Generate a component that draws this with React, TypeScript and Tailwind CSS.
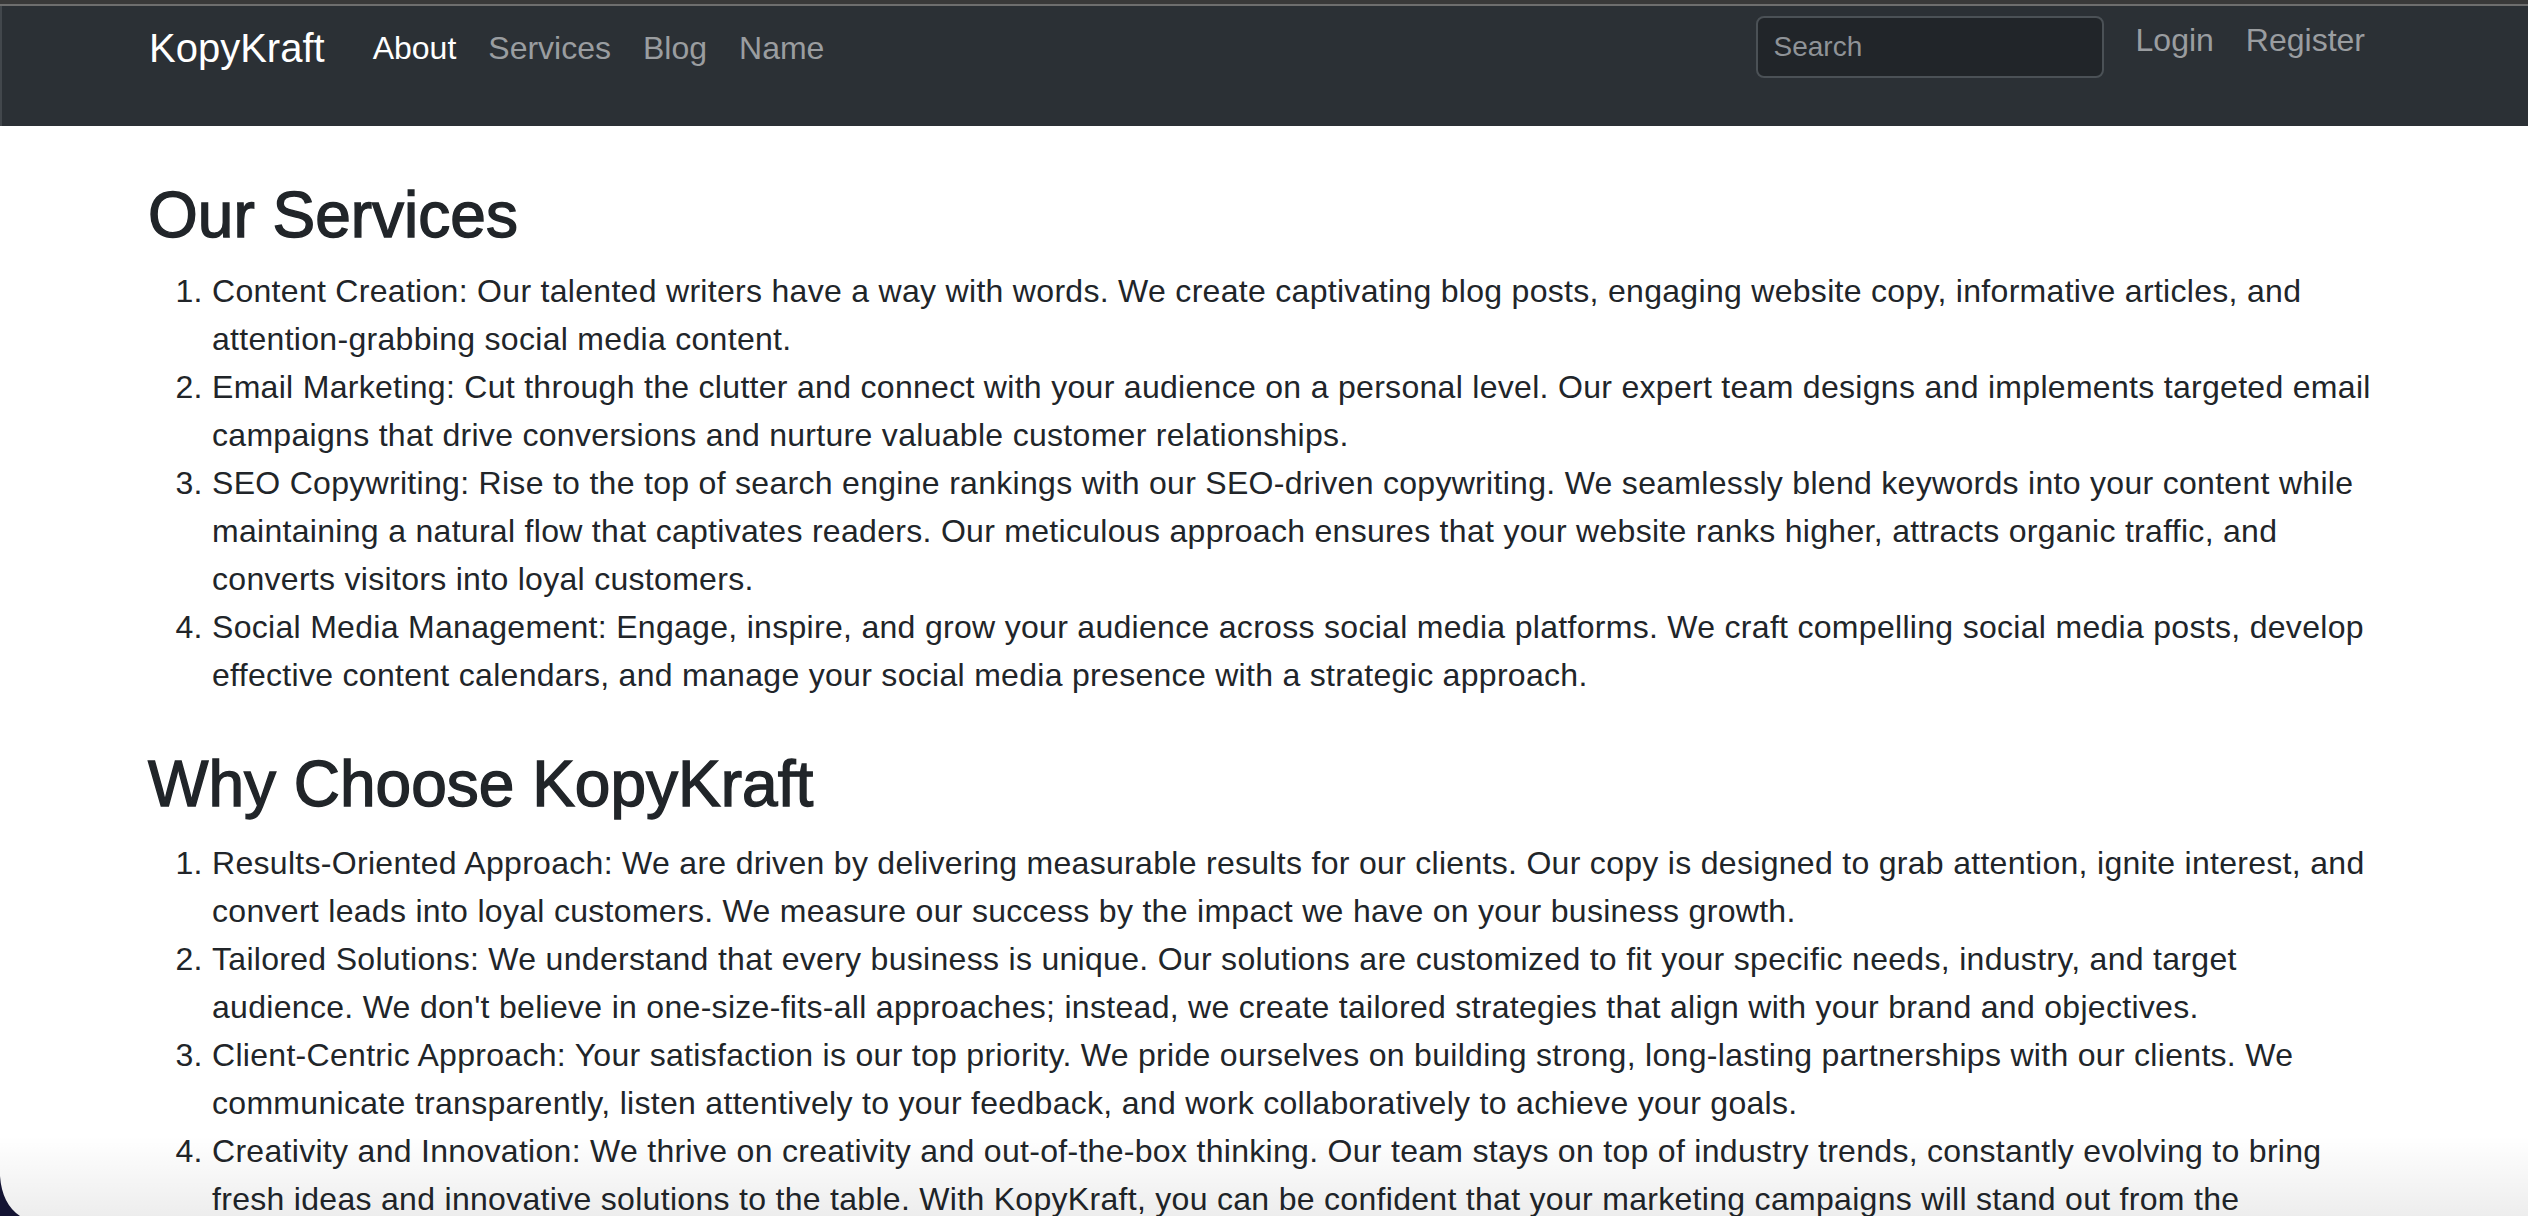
import React from "react";

const services: string[][] = [
  [
    "Content Creation: Our talented writers have a way with words. We create captivating blog posts, engaging website copy, informative articles, and",
    "attention-grabbing social media content.",
  ],
  [
    "Email Marketing: Cut through the clutter and connect with your audience on a personal level. Our expert team designs and implements targeted email",
    "campaigns that drive conversions and nurture valuable customer relationships.",
  ],
  [
    "SEO Copywriting: Rise to the top of search engine rankings with our SEO-driven copywriting. We seamlessly blend keywords into your content while",
    "maintaining a natural flow that captivates readers. Our meticulous approach ensures that your website ranks higher, attracts organic traffic, and",
    "converts visitors into loyal customers.",
  ],
  [
    "Social Media Management: Engage, inspire, and grow your audience across social media platforms. We craft compelling social media posts, develop",
    "effective content calendars, and manage your social media presence with a strategic approach.",
  ],
];

const reasons: string[][] = [
  [
    "Results-Oriented Approach: We are driven by delivering measurable results for our clients. Our copy is designed to grab attention, ignite interest, and",
    "convert leads into loyal customers. We measure our success by the impact we have on your business growth.",
  ],
  [
    "Tailored Solutions: We understand that every business is unique. Our solutions are customized to fit your specific needs, industry, and target",
    "audience. We don't believe in one-size-fits-all approaches; instead, we create tailored strategies that align with your brand and objectives.",
  ],
  [
    "Client-Centric Approach: Your satisfaction is our top priority. We pride ourselves on building strong, long-lasting partnerships with our clients. We",
    "communicate transparently, listen attentively to your feedback, and work collaboratively to achieve your goals.",
  ],
  [
    "Creativity and Innovation: We thrive on creativity and out-of-the-box thinking. Our team stays on top of industry trends, constantly evolving to bring",
    "fresh ideas and innovative solutions to the table. With KopyKraft, you can be confident that your marketing campaigns will stand out from the",
    "crowd.",
  ],
];

function List({ items, className }: { items: string[][]; className: string }) {
  return (
    <ol className={className}>
      {items.map((lines, i) => (
        <li key={i} className="whitespace-nowrap">
          {lines.map((l, j) => (
            <React.Fragment key={j}>
              {j > 0 && <br />}
              {l}
            </React.Fragment>
          ))}
        </li>
      ))}
    </ol>
  );
}

export default function App() {
  return (
    <div
      className="relative h-screen w-full overflow-hidden bg-white text-[#212529]"
      style={{ fontFamily: '"Liberation Sans", Arial, sans-serif' }}
    >
      <div className="h-[4px] bg-[#393939]" />
      <div className="h-[2px] bg-[#6e6e6e]" />
      <nav className="h-[120px] bg-[#2b3035] border-l-[2px] border-[#42474c]">
        <div className="mx-auto w-[2280px] px-[24px] flex items-start">
          <a className="mt-[12px] mr-[32px] text-[40px] leading-[60px] text-white">KopyKraft</a>
          <div className="flex mt-[18px] text-[32px] leading-[48px]">
            <a className="px-[16px] text-white">About</a>
            <a className="px-[16px] text-[#9a9da0]">Services</a>
            <a className="px-[16px] text-[#9a9da0]">Blog</a>
            <a className="px-[16px] text-[#9a9da0]">Name</a>
          </div>
          <div className="ml-auto flex items-start">
            <div className="mt-[10px] w-[348px] h-[62px] rounded-[8px] border-[2px] border-[#4b5156] bg-[#212529] px-[16px] flex items-center text-[28px] text-[#8f9397]">
              Search
            </div>
            <div className="flex ml-[16px] mt-[10px] text-[32px] leading-[48px]">
              <a className="px-[16px] text-[#9a9da0]">Login</a>
              <a className="px-[16px] text-[#9a9da0]">Register</a>
            </div>
          </div>
        </div>
      </nav>
      <main className="mx-auto w-[2280px] px-[24px] pt-[51px]">
        <h2 className="text-[64px] leading-[77px] mb-[13px] font-medium [-webkit-text-stroke:1.4px_#212529]">
          Our Services
        </h2>
        <List
          items={services}
          className="list-decimal pl-[64px] mb-[47px] text-[32px] leading-[48px] tracking-[0.3px]"
        />
        <h2 className="text-[64px] leading-[77px] mb-[16px] font-medium [-webkit-text-stroke:1.4px_#212529]">
          Why Choose KopyKraft
        </h2>
        <List
          items={reasons}
          className="list-decimal pl-[64px] mb-[32px] text-[32px] leading-[48px] tracking-[0.3px]"
        />
      </main>
      <div className="pointer-events-none absolute left-0 right-0 bottom-0 h-[80px] bg-gradient-to-b from-transparent to-[rgba(0,0,0,0.07)]" />
      <svg
        className="pointer-events-none absolute left-0 bottom-0"
        width="20"
        height="40"
        viewBox="0 0 20 40"
      >
        <path d="M0 0 Q2 28 20 40 L0 40 Z" fill="#141433" />
      </svg>
    </div>
  );
}
